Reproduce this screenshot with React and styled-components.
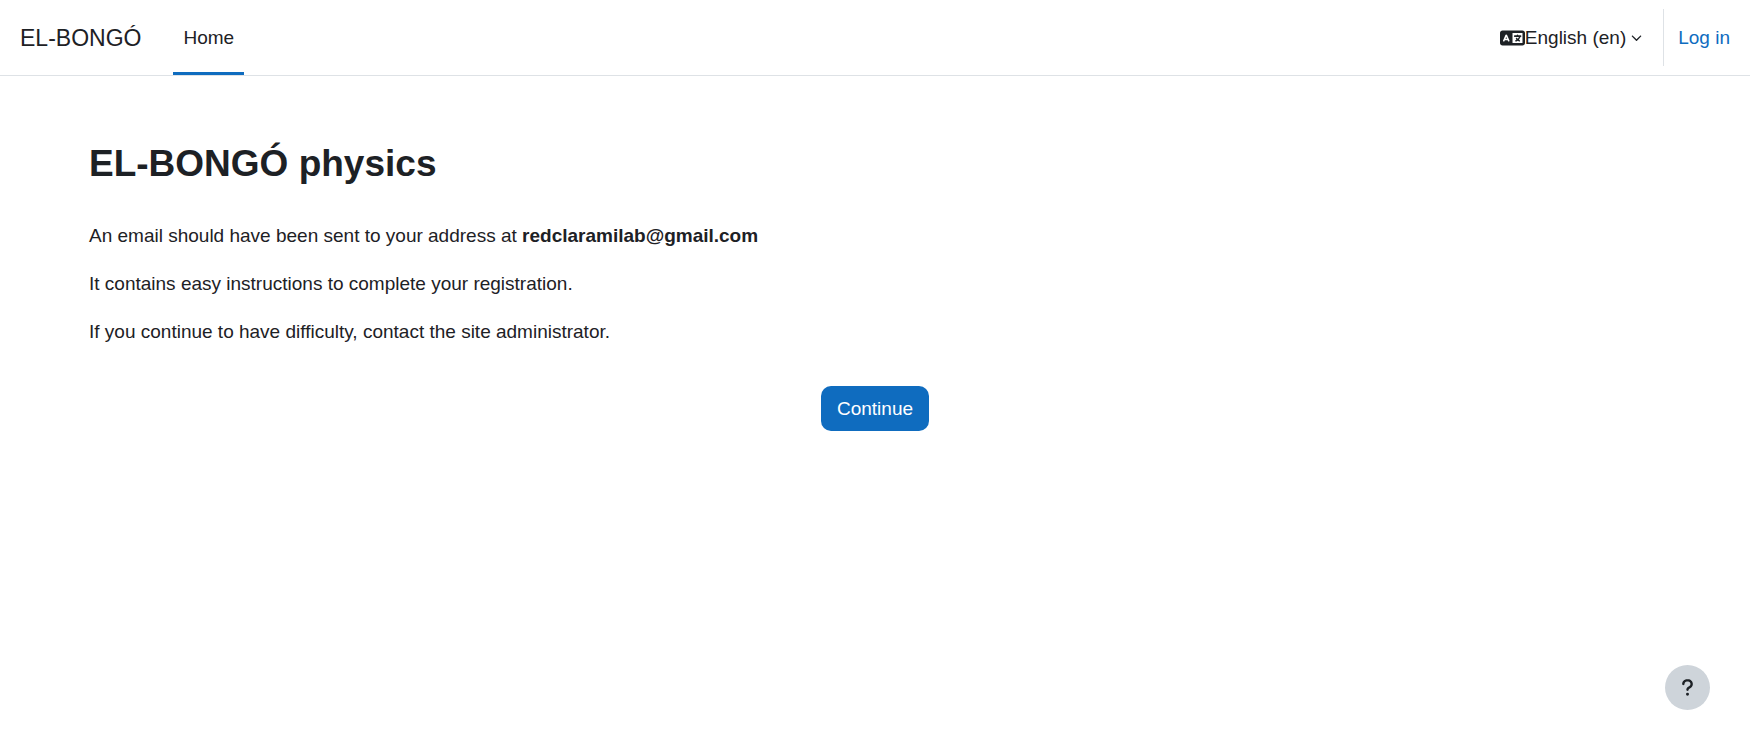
import React from "react";
import styled, { createGlobalStyle } from "styled-components";
import { FaLanguage, FaChevronDown, FaQuestion } from "react-icons/fa6";

const GlobalStyle = createGlobalStyle`
  *, *::before, *::after { box-sizing: border-box; }
  body {
    margin: 0;
    background: #fff;
    color: #1d2125;
    font: 400 19px/28px "Liberation Sans", Arial, sans-serif;
  }
`;

const Navbar = styled.header`
  display: flex;
  align-items: stretch;
  height: 76px;
  padding: 0 20px;
  border-bottom: 1px solid #dee2e6;
`;

const Brand = styled.a`
  display: flex;
  align-items: center;
  margin-right: 32px;
  color: #1d2125;
  font-size: 23px;
  text-decoration: none;
`;

const PrimaryNav = styled.nav`
  display: flex;
`;

const NavLink = styled.a`
  display: flex;
  align-items: center;
  padding: 3px 10px 0;
  border-bottom: 3px solid ${({ $active }) => ($active ? "#0f6cbf" : "transparent")};
  color: #1d2125;
  text-decoration: none;
`;

const UserNav = styled.div`
  display: flex;
  align-items: center;
  margin-left: auto;
`;

const LanguageToggle = styled.button`
  display: flex;
  align-items: center;
  padding: 0;
  border: 0;
  background: none;
  color: inherit;
  font: inherit;
  cursor: pointer;
`;

const LanguageIcon = styled(FaLanguage)`
  width: 25px;
  height: 20px;
`;

const Caret = styled(FaChevronDown)`
  width: 11px;
  height: 11px;
  margin-left: 5px;
`;

const Divider = styled.span`
  align-self: stretch;
  width: 1px;
  margin: 9px 14px 9px 21px;
  background: #dee2e6;
`;

const LoginLink = styled.a`
  color: #0f6cbf;
  text-decoration: none;
`;

const Main = styled.main`
  padding: 65px 89px;
`;

const Title = styled.h1`
  margin: 0 0 35px;
  font-size: 37px;
  line-height: 46px;
`;

const Notice = styled.p`
  margin: 0 0 20px;
`;

const Actions = styled.div`
  display: flex;
  justify-content: center;
  padding-top: 20px;
`;

const PrimaryButton = styled.button`
  height: 45px;
  padding: 0 16px;
  border: 0;
  border-radius: 10px;
  background: #0f6cbf;
  color: #fff;
  font: inherit;
  cursor: pointer;
`;

const HelpButton = styled.button`
  position: fixed;
  right: 40px;
  bottom: 40px;
  display: flex;
  align-items: center;
  justify-content: center;
  width: 45px;
  height: 45px;
  padding: 0;
  border: 0;
  border-radius: 50%;
  background: #ced4da;
  color: #1d2125;
  font-size: 19px;
  cursor: pointer;
`;

export default function App() {
  return (
    <>
      <GlobalStyle />
      <Navbar>
        <Brand href="#">EL-BONGÓ</Brand>
        <PrimaryNav aria-label="Site navigation">
          <NavLink href="#" $active aria-current="page">Home</NavLink>
        </PrimaryNav>
        <UserNav>
          <LanguageToggle type="button" aria-haspopup="true">
            <LanguageIcon aria-hidden="true" />
            English (en)
            <Caret aria-hidden="true" />
          </LanguageToggle>
          <Divider />
          <LoginLink href="#">Log in</LoginLink>
        </UserNav>
      </Navbar>
      <Main>
        <Title>EL-BONGÓ physics</Title>
        <Notice>
          An email should have been sent to your address at <b>redclaramilab@gmail.com</b>
        </Notice>
        <Notice>It contains easy instructions to complete your registration.</Notice>
        <Notice>If you continue to have difficulty, contact the site administrator.</Notice>
        <Actions>
          <PrimaryButton type="button">Continue</PrimaryButton>
        </Actions>
      </Main>
      <HelpButton type="button" aria-label="Show footer">
        <FaQuestion aria-hidden="true" />
      </HelpButton>
    </>
  );
}
